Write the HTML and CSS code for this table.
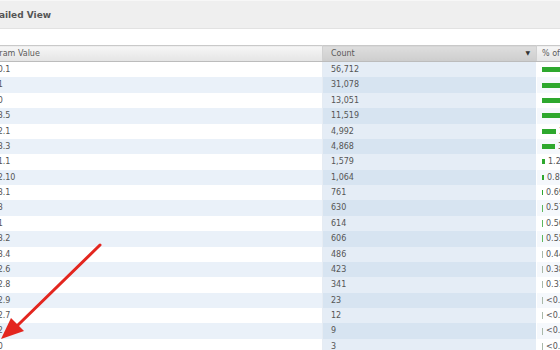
FILE: index.html
```html
<!DOCTYPE html>
<html>
<head>
<meta charset="utf-8">
<link rel="stylesheet" href="styles.css">
</head>
<body>
<div class="page">
  <div class="titlebar"><span class="title">Detailed View</span></div>
  <div class="gap"></div>
  <table class="grid">
    <thead>
      <tr>
        <th class="c-param">Param Value</th>
        <th class="c-count sorted">Count<span class="sort">&#9660;</span></th>
        <th class="c-pct">% of Total</th>
      </tr>
    </thead>
    <tbody>
      <tr><td class="c-param">5.0.1</td><td class="c-count">56,712</td><td class="c-pct"><span class="bar" style="width:60px"></span><span class="pv">44.04%</span></td></tr>
      <tr><td class="c-param">5.1</td><td class="c-count">31,078</td><td class="c-pct"><span class="bar" style="width:50px"></span><span class="pv">24.13%</span></td></tr>
      <tr><td class="c-param">5.0</td><td class="c-count">13,051</td><td class="c-pct"><span class="bar" style="width:30px"></span><span class="pv">10.14%</span></td></tr>
      <tr><td class="c-param">4.3.5</td><td class="c-count">11,519</td><td class="c-pct"><span class="bar" style="width:28px"></span><span class="pv">8.95%</span></td></tr>
      <tr><td class="c-param">4.2.1</td><td class="c-count">4,992</td><td class="c-pct"><span class="bar" style="width:14px"></span><span class="pv">3.88%</span></td></tr>
      <tr><td class="c-param">4.3.3</td><td class="c-count">4,868</td><td class="c-pct"><span class="bar" style="width:13px"></span><span class="pv">3.78%</span></td></tr>
      <tr><td class="c-param">5.1.1</td><td class="c-count">1,579</td><td class="c-pct"><span class="bar" style="width:3px"></span><span class="pv">1.23%</span></td></tr>
      <tr><td class="c-param">4.2.10</td><td class="c-count">1,064</td><td class="c-pct"><span class="bar" style="width:2px"></span><span class="pv">0.83%</span></td></tr>
      <tr><td class="c-param">4.3.1</td><td class="c-count">761</td><td class="c-pct"><span class="bar" style="width:1px"></span><span class="pv">0.69%</span></td></tr>
      <tr><td class="c-param">4.3</td><td class="c-count">630</td><td class="c-pct"><span class="bar thin" style="width:1px"></span><span class="pv">0.57%</span></td></tr>
      <tr><td class="c-param">4.1</td><td class="c-count">614</td><td class="c-pct"><span class="bar thin" style="width:1px"></span><span class="pv">0.56%</span></td></tr>
      <tr><td class="c-param">4.3.2</td><td class="c-count">606</td><td class="c-pct"><span class="bar thin" style="width:1px"></span><span class="pv">0.55%</span></td></tr>
      <tr><td class="c-param">4.3.4</td><td class="c-count">486</td><td class="c-pct"><span class="bar grey" style="width:1px"></span><span class="pv">0.44%</span></td></tr>
      <tr><td class="c-param">4.2.6</td><td class="c-count">423</td><td class="c-pct"><span class="bar grey" style="width:1px"></span><span class="pv">0.38%</span></td></tr>
      <tr><td class="c-param">4.2.8</td><td class="c-count">341</td><td class="c-pct"><span class="bar grey" style="width:1px"></span><span class="pv">0.31%</span></td></tr>
      <tr><td class="c-param">4.2.9</td><td class="c-count">23</td><td class="c-pct"><span class="bar grey" style="width:1px"></span><span class="pv">&lt;0.01%</span></td></tr>
      <tr><td class="c-param">4.2.7</td><td class="c-count">12</td><td class="c-pct"><span class="bar grey" style="width:1px"></span><span class="pv">&lt;0.01%</span></td></tr>
      <tr><td class="c-param">4.2</td><td class="c-count">9</td><td class="c-pct"><span class="bar grey" style="width:1px"></span><span class="pv">&lt;0.01%</span></td></tr>
      <tr><td class="c-param">3.0</td><td class="c-count">3</td><td class="c-pct"><span class="bar grey" style="width:1px"></span><span class="pv">&lt;0.01%</span></td></tr>
    </tbody>
  </table>
  <svg class="arrow" width="110" height="110" viewBox="0 0 110 110">
    <line x1="100" y1="6" x2="18" y2="86" stroke="#e3261f" stroke-width="3" stroke-linecap="round"/>
    <polygon points="1,100 24,92 11,79" fill="#e3261f"/>
  </svg>
</div>
</body>
</html>
```
FILE: styles.css
```css
html, body {
  margin: 0;
  padding: 0;
  background: #ffffff;
  overflow: hidden;
}
body {
  width: 560px;
  height: 350px;
  font-family: "DejaVu Sans", Verdana, sans-serif;
}
.page {
  position: relative;
  margin-left: -20px;
  width: 660px;
}
.titlebar {
  height: 27px;
  background: #efefef;
  border-top: 1px solid #f7f7f7;
  border-bottom: 1px solid #e2e2e2;
  display: flex;
  align-items: center;
  padding-left: 1px;
}
.title {
  font-weight: bold;
  font-size: 9px;
  color: #555;
}
.gap {
  height: 16px;
}
.grid {
  border-collapse: collapse;
  table-layout: fixed;
  width: 660px;
  font-size: 8px;
  color: #555;
}
.grid th {
  height: 15px;
  padding: 0;
  text-align: left;
  font-weight: normal;
  color: #5a5a5a;
  background: linear-gradient(#f6f6f6, #e4e4e4);
  border-top: 1px solid #c9c9c9;
  border-bottom: 1px solid #bcbcbc;
  border-right: 1px solid #d0d0d0;
}
.grid th.sorted {
  background: linear-gradient(#dedede, #cdcdcd);
}
.sort {
  float: right;
  font-size: 6px;
  color: #333;
  margin-right: 6px;
}
.c-param { width: 332px; padding-left: 10px !important; }
.c-count { width: 205px; padding-left: 8px !important; }
.c-pct { padding-left: 5px !important; }
.grid td {
  height: 15.25px;
  padding: 0;
  white-space: nowrap;
  overflow: hidden;
  line-height: 15.25px;
}
.grid tbody tr:nth-child(odd) td.c-param,
.grid tbody tr:nth-child(odd) td.c-pct { background: #ffffff; }
.grid tbody tr:nth-child(even) td.c-param { background: #eaf1f9; }
.grid tbody tr:nth-child(even) td.c-pct { background: #f5f8fc; }
.grid tbody tr:nth-child(odd) td.c-count { background: #e5edf6; }
.grid tbody tr:nth-child(even) td.c-count { background: #d7e4f1; }
.grid td.c-count { border-left: 1px solid #e6ecf3; border-right: 1px solid #ffffff; }
.bar {
  display: inline-block;
  height: 5px;
  background: #2ea82e;
  vertical-align: middle;
  margin-right: 3px;
}
.bar.thin { height: 7px; background: #5cb85c; }
.bar.grey { height: 7px; background: #a9b9a9; }
.pv { vertical-align: middle; }
.arrow {
  position: absolute;
  left: 20px;
  top: 239px;
}
```
